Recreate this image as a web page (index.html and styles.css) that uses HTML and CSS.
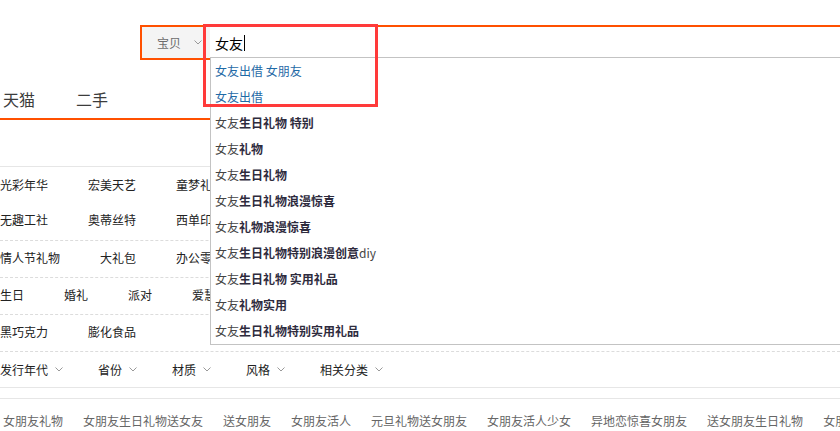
FILE: index.html
```html
<!DOCTYPE html>
<html lang="zh-CN">
<head>
<meta charset="utf-8">
<title>淘宝搜索</title>
<link rel="stylesheet" href="styles.css">
</head>
<body>
<div class="page">
  <header class="search-wrap">
    <div class="search">
      <div class="selector">
        <span>宝贝</span>
        <svg class="chev" width="8" height="5" viewBox="0 0 8 5"><path d="M0.5 0.5 L4 4 L7.5 0.5" fill="none" stroke="#999" stroke-width="1"/></svg>
      </div>
      <div class="input"><span>女友</span><span class="caret"></span></div>
    </div>
    <ul class="suggest">
      <li class="hot">女友出借 女朋友</li>
      <li class="hot">女友出借</li>
      <li>女友<b>生日礼物 特别</b></li>
      <li>女友<b>礼物</b></li>
      <li>女友<b>生日礼物</b></li>
      <li>女友<b>生日礼物浪漫惊喜</b></li>
      <li>女友<b>礼物浪漫惊喜</b></li>
      <li>女友<b>生日礼物特别浪漫创意</b>diy</li>
      <li>女友<b>生日礼物 实用礼品</b></li>
      <li>女友<b>礼物实用</b></li>
      <li>女友<b>生日礼物特别实用礼品</b></li>
    </ul>
    <div class="highlight"></div>
  </header>

  <nav class="tabs">
    <a>天猫</a>
    <a>二手</a>
  </nav>

  <section class="cats">
    <div class="group first">
      <div class="row"><a>光彩年华</a><a>宏美天艺</a><a>童梦礼品</a></div>
      <div class="row"><a>无趣工社</a><a>奥蒂丝特</a><a>西单印象</a></div>
    </div>
    <div class="group">
      <div class="row"><a>情人节礼物</a><a>大礼包</a><a>办公零食</a></div>
    </div>
    <div class="group">
      <div class="row"><a>生日</a><a>婚礼</a><a>派对</a><a>爱慧</a></div>
    </div>
    <div class="group">
      <div class="row"><a>黑巧克力</a><a>膨化食品</a></div>
    </div>
  </section>

  <div class="filters">
    <a>发行年代<svg class="chev" width="8" height="5" viewBox="0 0 8 5"><path d="M0.5 0.5 L4 4 L7.5 0.5" fill="none" stroke="#999" stroke-width="1"/></svg></a>
    <a>省份<svg class="chev" width="8" height="5" viewBox="0 0 8 5"><path d="M0.5 0.5 L4 4 L7.5 0.5" fill="none" stroke="#999" stroke-width="1"/></svg></a>
    <a>材质<svg class="chev" width="8" height="5" viewBox="0 0 8 5"><path d="M0.5 0.5 L4 4 L7.5 0.5" fill="none" stroke="#999" stroke-width="1"/></svg></a>
    <a>风格<svg class="chev" width="8" height="5" viewBox="0 0 8 5"><path d="M0.5 0.5 L4 4 L7.5 0.5" fill="none" stroke="#999" stroke-width="1"/></svg></a>
    <a>相关分类<svg class="chev" width="8" height="5" viewBox="0 0 8 5"><path d="M0.5 0.5 L4 4 L7.5 0.5" fill="none" stroke="#999" stroke-width="1"/></svg></a>
  </div>

  <div class="related">
    <a>女朋友礼物</a>
    <a>女朋友生日礼物送女友</a>
    <a>送女朋友</a>
    <a>女朋友活人</a>
    <a>元旦礼物送女朋友</a>
    <a>女朋友活人少女</a>
    <a>异地恋惊喜女朋友</a>
    <a>送女朋友生日礼物</a>
    <a>女朋友礼物</a>
  </div>
</div>
</body>
</html>
```

FILE: styles.css
```css
* { box-sizing: border-box; }
html, body {
  margin: 0;
  padding: 0;
  background: #fff;
  overflow: hidden;
}
body {
  font-family: "Noto Sans CJK SC", "Noto Sans", sans-serif;
  font-size: 12px;
  color: #333;
}
.page {
  width: 840px;
  height: 431px;
  overflow: hidden;
}
a { color: inherit; text-decoration: none; white-space: nowrap; }

/* search */
.search-wrap {
  position: relative;
  padding-top: 25px;
}
.search {
  display: flex;
  margin-left: 140px;
  width: 900px;
  height: 35px;
  border: 2px solid #ff5000;
  border-right: none;
}
.selector {
  width: 68px;
  flex: none;
  background: #f4f4f4;
  display: flex;
  align-items: center;
  padding-left: 15px;
  color: #6c6c6c;
  font-size: 12px;
}
.selector .chev { margin-left: 13px; }
.input {
  flex: 1;
  display: flex;
  align-items: center;
  padding-left: 5px;
  font-size: 14px;
  color: #000;
}
.caret {
  display: inline-block;
  width: 1px;
  height: 16px;
  background: #000;
  margin-left: 1px;
}
.suggest {
  position: absolute;
  left: 210px;
  top: 57px;
  width: 700px;
  margin: 0;
  padding: 0;
  list-style: none;
  background: #fff;
  border: 1px solid #c3c3c3;
  z-index: 5;
}
.suggest li {
  height: 26px;
  line-height: 26px;
  padding-left: 4px;
  font-family: "Noto Sans CJK SC", sans-serif;
  font-size: 12px;
  color: #444;
}
.suggest li b { font-weight: 700; color: #2e2b3d; }
.suggest li.hot { color: #1f6aa6; }
.highlight {
  position: absolute;
  left: 203px;
  top: 24px;
  width: 175px;
  height: 83px;
  border: 3px solid #ff3a3a;
  z-index: 6;
}

/* tabs */
.tabs {
  display: flex;
  gap: 41px;
  padding: 27px 0 7px 3px;
  line-height: 24px;
  font-size: 16px;
  color: #3c3c3c;
  border-bottom: 2px solid #ff5000;
}

/* categories */
.cats {
  margin-top: 46px;
  border-top: 1px solid #e6e6e6;
}
.group {
  border-bottom: 1px dashed #dcdcdc;
}
.group.first { padding-bottom: 3px; }
.row {
  display: flex;
  gap: 40px;
  width: 210px;
  overflow: hidden;
  height: 36px;
  line-height: 34px;
  color: #222;
}
.group.first .row { height: 35px; line-height: 35px; }

/* filters */
.filters {
  display: flex;
  gap: 35px;
  height: 36px;
  align-items: center;
  border-bottom: 1px solid #e6e6e6;
  color: #222;
}
.filters a { display: flex; align-items: center; }
.filters .chev { margin-left: 7px; }

.related {
  margin-top: 10px;
  border-top: 1px solid #e6e6e6;
  display: flex;
  gap: 20px;
  padding: 13px 0 0 3px;
  line-height: 18px;
  color: #666;
}
```
